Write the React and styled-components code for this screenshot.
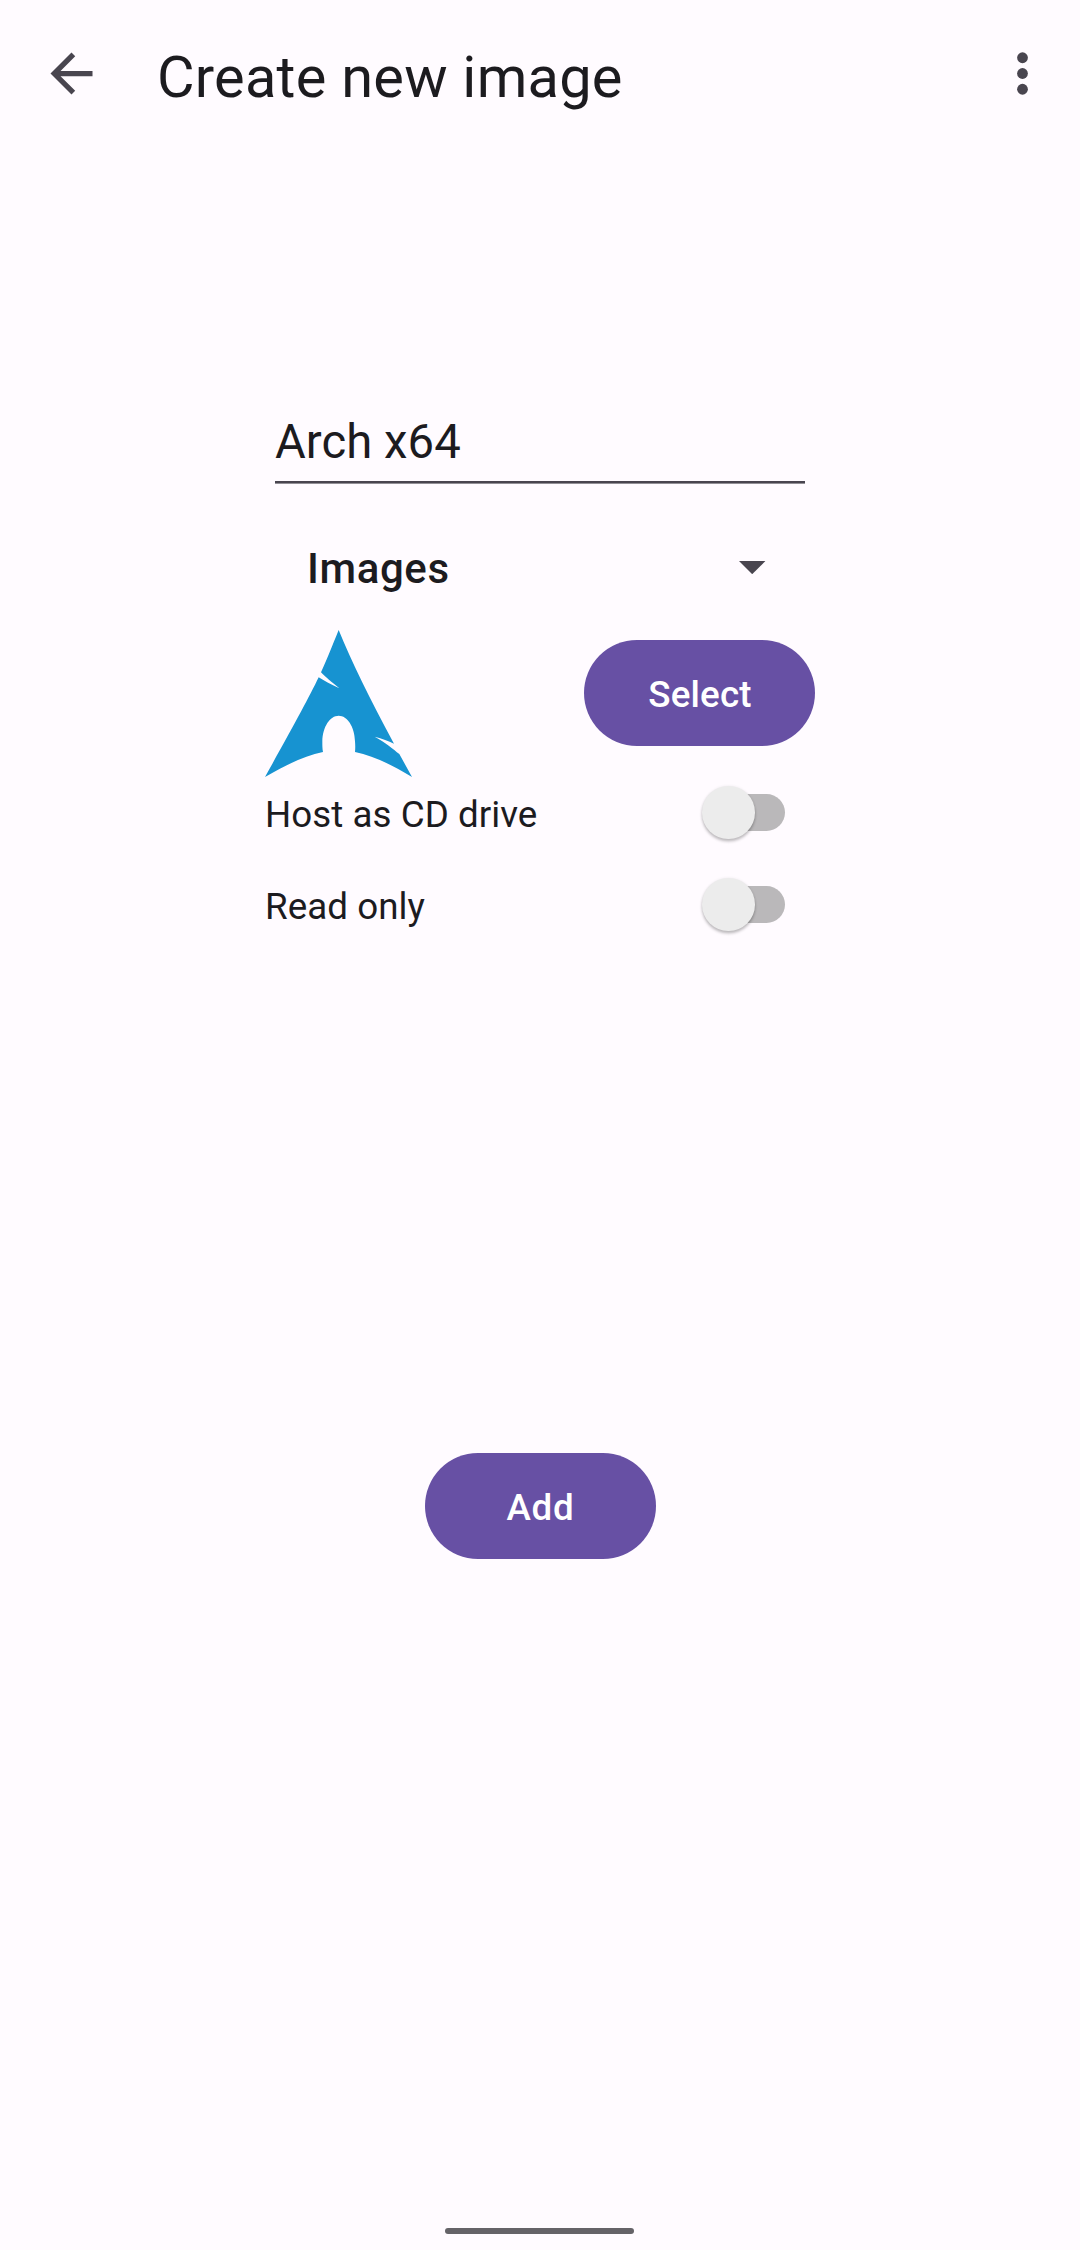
import React, { useState } from "react";
import styled, { createGlobalStyle } from "styled-components";

const GlobalStyle = createGlobalStyle`
  *, *::before, *::after { box-sizing: border-box; }
  html, body { margin: 0; padding: 0; background: #fffbff; }
  body { font-family: Roboto, "Noto Sans", sans-serif; color: #1c1b1f; }
  button, input { font-family: inherit; color: inherit; border: 0; padding: 0; margin: 0; background: none; }
`;

const Screen = styled.div`
  display: flex;
  flex-direction: column;
  width: 1080px;
  height: 2250px;
  background: #fffbff;
`;

const Toolbar = styled.header`
  display: flex;
  align-items: center;
  height: 147px;
  padding: 0 26px 0 39.6px;
`;

const IconButton = styled.button`
  display: flex;
  width: 63px;
  height: 63px;
  color: #49454f;

  svg { display: block; width: 63px; height: 63px; fill: currentColor; }
`;

const Title = styled.h1`
  flex: 1;
  margin: 0;
  padding: 6px 0 0 54.4px;
  font-size: 57.75px;
  font-weight: 400;
  line-height: 68px;
  letter-spacing: 0.24px;
`;

const Form = styled.main`
  display: flex;
  flex-direction: column;
  flex: 1;
  width: 550px;
  margin: 0 auto;
  padding-top: 254px;
`;

const NameInput = styled.input`
  width: 530px;
  height: 82px;
  margin: 0 10px;
  padding: 1px 0 0;
  border-bottom: 2px solid #49454f;
  border-radius: 0;
  box-shadow: 0 1px 0 #928f96;
  outline: none;
  font-size: 47.25px;
  line-height: 56px;
  letter-spacing: 0.05px;
`;

const Dropdown = styled.button`
  display: flex;
  align-items: center;
  justify-content: space-between;
  height: 126px;
  margin-top: 22.6px;
  padding: 0 49.2px 0 42px;
  font-size: 42px;
  font-weight: 500;
  line-height: 48px;
  letter-spacing: 0.6px;

  svg { display: block; width: 26.4px; height: 13.2px; margin-top: -2.4px; fill: #49454f; }
`;

const ImageRow = styled.div`
  display: flex;
  justify-content: space-between;
  height: 147px;
  margin-top: -2px;
`;

const Logo = styled.svg`
  display: block;
  width: 147px;
  height: 147px;
  fill: #1793d1;
`;

const FilledButton = styled.button`
  width: 231px;
  height: 106px;
  margin-top: ${(p) => p.$top}px;
  padding: 3px 0 0 1px;
  align-self: ${(p) => p.$align};
  border-radius: 53px;
  background: #6750a4;
  color: #fff;
  font-size: 36.75px;
  font-weight: 500;
  line-height: 43px;
  letter-spacing: ${(p) => p.$tracking || 0.2}px;
`;

const SwitchRow = styled.label`
  display: flex;
  align-items: center;
  justify-content: space-between;
  height: 92px;
  padding-right: 30px;
  margin-top: ${(p) => p.$top || 0}px;
`;

const SwitchText = styled.span`
  padding-top: 4px;
  font-size: 36.75px;
  line-height: 43px;
  letter-spacing: 0.04px;
`;

const Track = styled.button`
  display: flex;
  align-items: center;
  justify-content: ${(p) => (p.$on ? "flex-end" : "flex-start")};
  width: 74px;
  height: 37px;
  border-radius: 18.5px;
  background: ${(p) => (p.$on ? "#b3a7d1" : "#bab8ba")};
`;

const Thumb = styled.span`
  flex: none;
  width: 52.5px;
  height: 52.5px;
  margin: 0 -9px;
  border-radius: 50%;
  background: ${(p) => (p.$on ? "#6750a4" : "#ececec")};
  box-shadow: 0 2.5px 3px rgba(0, 0, 0, 0.24), 0 0 3px rgba(0, 0, 0, 0.08);
`;

const NavBar = styled.footer`
  display: flex;
  justify-content: center;
  height: 22px;
  padding-right: 1px;
`;

const NavHandle = styled.div`
  width: 189px;
  height: 6px;
  border-radius: 3px;
  background: #656368;
`;

function SwitchField({ label, top }) {
  const [on, setOn] = useState(false);
  return (
    <SwitchRow $top={top}>
      <SwitchText>{label}</SwitchText>
      <Track type="button" role="switch" aria-checked={on} $on={on} onClick={() => setOn(!on)}>
        <Thumb $on={on} />
      </Track>
    </SwitchRow>
  );
}

export default function App() {
  const [name, setName] = useState("Arch x64");
  return (
    <>
      <GlobalStyle />
      <Screen>
        <Toolbar>
          <IconButton type="button" aria-label="Back">
            <svg viewBox="0 0 24 24">
              <path d="M20 11H7.83l5.59-5.59L12 4l-8 8 8 8 1.41-1.41L7.83 13H20v-2z" />
            </svg>
          </IconButton>
          <Title>Create new image</Title>
          <IconButton type="button" aria-label="More options">
            <svg viewBox="0 0 24 24">
              <circle cx="12" cy="6" r="2.05" />
              <circle cx="12" cy="12" r="2.05" />
              <circle cx="12" cy="18" r="2.05" />
            </svg>
          </IconButton>
        </Toolbar>
        <Form>
          <NameInput value={name} spellCheck={false} onChange={(e) => setName(e.target.value)} />
          <Dropdown type="button">
            <span>Images</span>
            <svg viewBox="0 0 10 5">
              <path d="M0 0h10L5 5z" />
            </svg>
          </Dropdown>
          <ImageRow>
            <Logo viewBox="0 0 441 441">
              <path d="M221 0C201 49 189 81 168 127C181 141 198 155 223 175C196 163 177 152 161 142C131 204 85 289 0 441C68 402 120 377 174 366C172 356 172 346 172 334C173 290 195 257 221 257C247 257 269 290 270 334C271 346 271 356 270 366C323 377 377 402 441 441L403 372C384 357 362 337 329 320C352 326 370 333 387 341Q278 140 221 0Z" />
            </Logo>
            <FilledButton type="button" $top={10} $align="flex-start">Select</FilledButton>
          </ImageRow>
          <SwitchField label="Host as CD drive" top={-10} />
          <SwitchField label="Read only" />
          <FilledButton type="button" $top={502} $align="center" $tracking={0.7}>Add</FilledButton>
        </Form>
        <NavBar>
          <NavHandle />
        </NavBar>
      </Screen>
    </>
  );
}
